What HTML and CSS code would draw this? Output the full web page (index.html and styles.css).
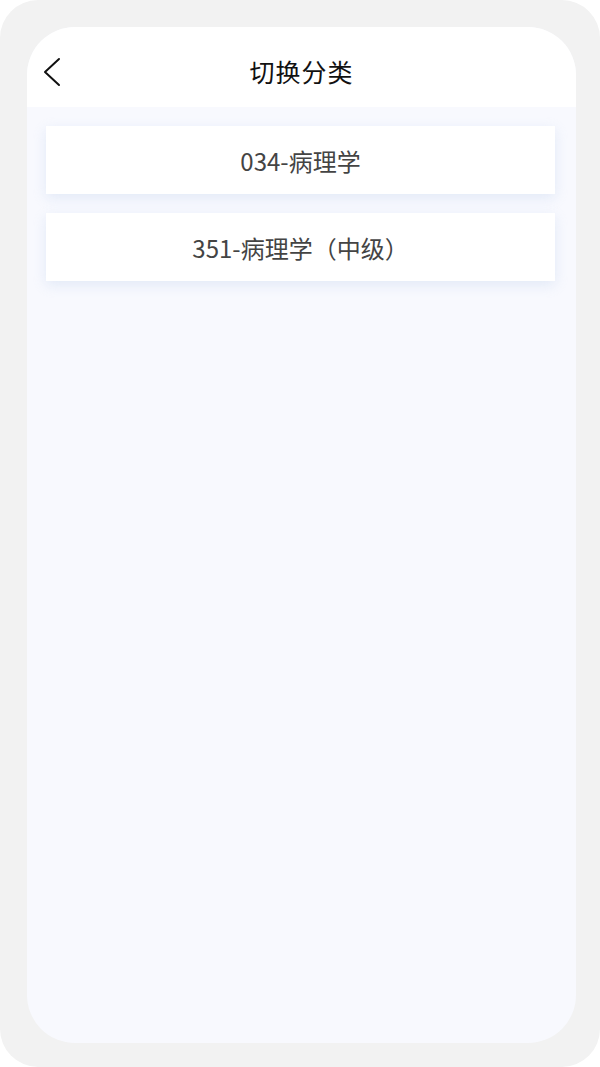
FILE: index.html
```html
<!DOCTYPE html>
<html lang="zh">
<head>
<meta charset="utf-8">
<link rel="stylesheet" href="styles.css">
</head>
<body>
<div class="frame">
  <div class="screen">
    <header class="topbar">
      <div class="back">
        <svg width="18" height="30" viewBox="0 0 18 30"><polyline points="16,2 2,15 16,28" fill="none" stroke="#111" stroke-width="2" stroke-linecap="round" stroke-linejoin="round"/></svg>
      </div>
      <h1 class="title">切换分类</h1>
      <div></div>
    </header>
    <main class="list">
      <div class="card">034-病理学</div>
      <div class="card">351-病理学（中级）</div>
    </main>
  </div>
</div>
</body>
</html>
```
FILE: styles.css
```css
html, body {
  margin: 0;
  padding: 0;
  background: #ffffff;
}
body {
  font-family: "Noto Sans CJK SC", "Noto Sans", sans-serif;
}
.frame {
  width: 600px;
  height: 1067px;
  box-sizing: border-box;
  background: #f2f2f2;
  border-radius: 38px;
  padding: 27px 24px 24px 27px;
}
.screen {
  height: 100%;
  background: #f8f9fe;
  border-radius: 48px;
  overflow: hidden;
  display: flex;
  flex-direction: column;
}
.topbar {
  height: 80px;
  box-sizing: border-box;
  padding-top: 8px;
  flex: none;
  background: #ffffff;
  display: grid;
  grid-template-columns: 1fr auto 1fr;
  align-items: center;
}
.back {
  padding-left: 16px;
  padding-top: 2px;
  display: flex;
  align-items: center;
}
.title {
  margin: 0;
  font-size: 25px;
  font-weight: 400;
  color: #111111;
  letter-spacing: 1px;
}
.list {
  padding: 19px 21px 0 19px;
  display: flex;
  flex-direction: column;
  gap: 19px;
}
.card {
  height: 68px;
  background: #ffffff;
  box-shadow: 0 4px 12px rgba(200, 215, 240, 0.45);
  display: flex;
  align-items: center;
  justify-content: center;
  font-size: 24px;
  color: #444444;
}
```
